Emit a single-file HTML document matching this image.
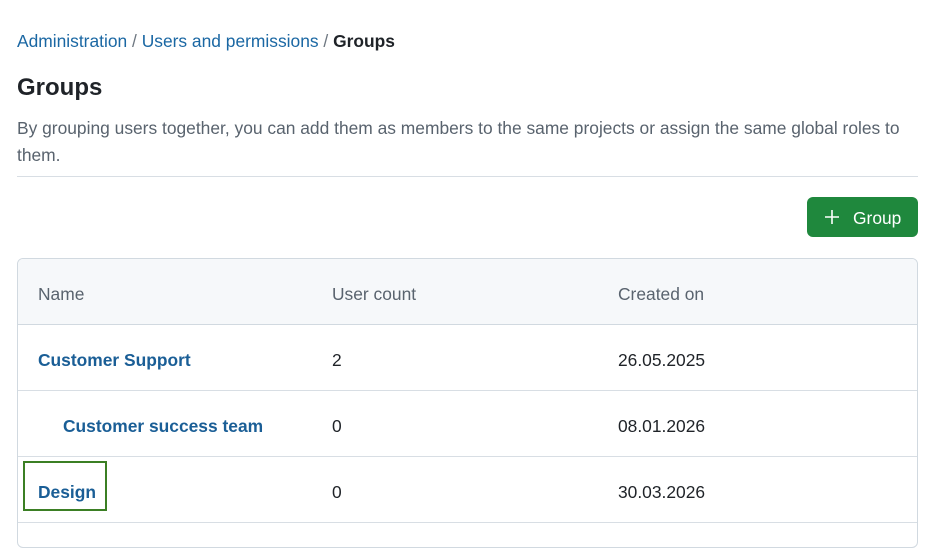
<!DOCTYPE html>
<html><head><meta charset="utf-8"><style>
*{box-sizing:border-box;margin:0;padding:0}
body{width:937px;height:527px;overflow:hidden;background:#fff;font-family:"Segoe UI","Liberation Sans",sans-serif;color:#1f2328;position:relative}
.a{position:absolute;white-space:nowrap}
.bc{left:17px;top:30px;font-size:17.4px;line-height:22px;color:#6e7781}
.bc span.l{color:#1a67a3}
.bc b{color:#1f2328;font-weight:600}
h1{position:absolute;left:17px;top:73px;font-size:24px;font-weight:600;line-height:30px}
.desc{position:absolute;left:17px;top:115px;width:905px;font-size:17.4px;line-height:27px;color:#59636e}
.hr{position:absolute;left:17px;top:176px;width:901px;height:1px;background:#d8dee4}
.btn{position:absolute;left:807px;top:197px;width:111px;height:40px;background:#1f883d;border-radius:6px;color:#fff;font-size:17.4px;line-height:42px}
.tbl{position:absolute;left:17px;top:258px;width:901px;height:290px;border:1px solid #d1d9e0;border-radius:6px;overflow:hidden}
.hd{height:66px;background:#f6f8fa;border-bottom:1px solid #d1d9e0;position:relative}
.row{height:66px;border-bottom:1px solid #d8dee4;position:relative}
.c{position:absolute;top:2px;line-height:66px;font-size:17.4px}
.hd .c{color:#59636e}
.n{color:#1a5e96;font-weight:600}
.focus{position:absolute;left:23px;top:461px;width:84px;height:50px;border:2px solid #3b7f24}
</style></head><body>
<div class="a bc"><span class="l">Administration</span> / <span class="l">Users and permissions</span> / <b>Groups</b></div>
<h1>Groups</h1>
<div class="desc">By grouping users together, you can add them as members to the same projects or assign the same global roles to them.</div>
<div class="hr"></div>
<div class="btn"><svg style="position:absolute;left:18px;top:13px" width="14" height="14" viewBox="0 0 14 14"><path d="M7 0V14M0 7H14" stroke="#fff" stroke-width="1.6"/></svg><span style="position:absolute;left:46px">Group</span></div>
<div class="tbl">
<div class="hd"><span class="c" style="left:20px">Name</span><span class="c" style="left:314px">User count</span><span class="c" style="left:600px">Created on</span></div>
<div class="row"><span class="c n" style="left:20px">Customer Support</span><span class="c" style="left:314px">2</span><span class="c" style="left:600px">26.05.2025</span></div>
<div class="row"><span class="c n" style="left:45px">Customer success team</span><span class="c" style="left:314px">0</span><span class="c" style="left:600px">08.01.2026</span></div>
<div class="row"><span class="c n" style="left:20px">Design</span><span class="c" style="left:314px">0</span><span class="c" style="left:600px">30.03.2026</span></div>
</div>
<div class="focus"></div>
</body></html>
